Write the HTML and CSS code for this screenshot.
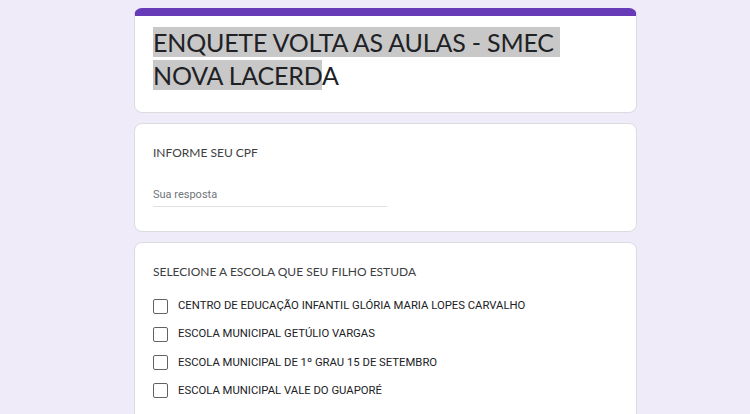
FILE: index.html
```html
<!DOCTYPE html>
<html lang="pt-BR">
<head>
  <meta charset="UTF-8" />
  <meta name="viewport" content="width=device-width, initial-scale=1.0"/>
  <title>ENQUETE VOLTA AS AULAS - SMEC NOVA LACERDA</title>
  <link rel="stylesheet" href="styles.css">
</head>
<body>
  <div class="form">
    <div class="card header">
      <div class="title"><span class="sel">ENQUETE VOLTA AS AULAS - SMEC&nbsp;<br>NOVA LACERD</span>A</div>
    </div>

    <div class="card">
      <div class="question">INFORME SEU CPF</div>
      <div class="answer">Sua resposta</div>
    </div>

    <div class="card">
      <div class="question">SELECIONE A ESCOLA QUE SEU FILHO ESTUDA</div>
      <div class="options">
        <label class="option"><span class="box"></span>CENTRO DE EDUCAÇÃO INFANTIL GLÓRIA MARIA LOPES CARVALHO</label>
        <label class="option"><span class="box"></span>ESCOLA MUNICIPAL GETÚLIO VARGAS</label>
        <label class="option"><span class="box"></span>ESCOLA MUNICIPAL DE 1º GRAU 15 DE SETEMBRO</label>
        <label class="option"><span class="box"></span>ESCOLA MUNICIPAL VALE DO GUAPORÉ</label>
      </div>
    </div>
  </div>
</body>
</html>
```

FILE: styles.css
```css
* {
  box-sizing: border-box;
}

body {
  margin: 0;
  background: #f0ebf8;
  font-family: Lato, 'Noto Sans', sans-serif;
  color: #202124;
}

.form {
  width: 503px;
  margin-left: 134px;
  padding-top: 8px;
  display: flex;
  flex-direction: column;
  gap: 10px;
}

.card {
  background: #ffffff;
  border: 1px solid #dadce0;
  border-radius: 8px;
  padding: 20px 18px 24px;
}

.card.header {
  border-top: 8px solid #673ab7;
  padding: 10px 18px 20px;
}

.title {
  font-size: 25px;
  line-height: 33px;
  letter-spacing: -0.2px;
  color: #202124;
}

.sel {
  background: #c8c8c8;
}

.question {
  font-size: 12px;
  line-height: 18px;
  color: #3c4043;
}

.answer {
  margin-top: 26px;
  width: 234px;
  padding-bottom: 5px;
  border-bottom: 1px solid #e0e0e0;
  font-family: Roboto, sans-serif;
  font-size: 11px;
  color: #70757a;
}

.options {
  margin-top: 17px;
  display: flex;
  flex-direction: column;
  gap: 12.3px;
}

.option {
  display: flex;
  align-items: center;
  gap: 10px;
  font-family: Roboto, sans-serif;
  font-size: 11.3px;
  line-height: 16px;
  color: #202124;
}

.box {
  width: 15px;
  height: 15px;
  border: 1.5px solid #5f6368;
  border-radius: 2px;
  flex-shrink: 0;
}
```
